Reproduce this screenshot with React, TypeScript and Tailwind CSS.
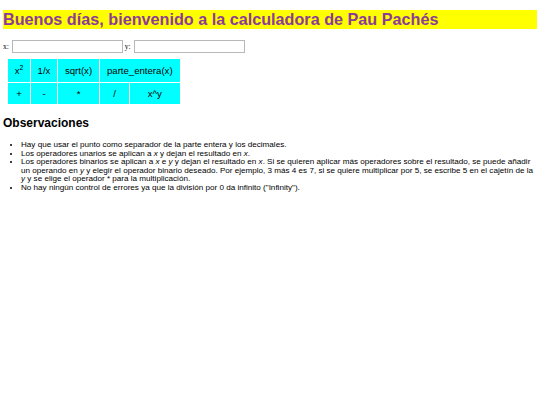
export default function App() {
  const sans = { fontFamily: '"Liberation Sans", Arial, sans-serif' }
  return (
    <div className="min-h-[405px] bg-white px-[3px] pt-[10px] text-black" style={sans}>
      <h1 className="bg-[#ffff00] text-[16.2px] font-bold leading-[19px] text-[#8e3b98]">
        Buenos días, bienvenido a la calculadora de Pau Pachés
      </h1>

      <div className="mt-[11px] flex items-center text-[7.5px]" style={{ fontFamily: '"Liberation Serif", serif' }}>
        <span className="mr-[3px]">x:</span>
        <input className="h-[13px] w-[111px] border border-[#b8b8b8] bg-white" />
        <span className="ml-[2px] mr-[3px]">y:</span>
        <input className="h-[13px] w-[111px] border border-[#b8b8b8] bg-white" />
      </div>

      <table className="ml-[4px] mt-[5px] border-separate border-spacing-[1px] text-center text-[9.6px] leading-none">
        <tbody>
          <tr className="h-[23px]">
            <td className="w-[22px] bg-[#00ffff]">
              x<sup className="text-[7px]">2</sup>
            </td>
            <td className="w-[26px] bg-[#00ffff]">1/x</td>
            <td className="w-[41px] bg-[#00ffff]">sqrt(x)</td>
            <td colSpan={2} className="bg-[#00ffff] px-[7px]">parte_entera(x)</td>
          </tr>
          <tr className="h-[21px]">
            <td className="bg-[#00ffff]">+</td>
            <td className="bg-[#00ffff]">-</td>
            <td className="bg-[#00ffff]">*</td>
            <td className="w-[29px] bg-[#00ffff]">/</td>
            <td className="bg-[#00ffff]">x^y</td>
          </tr>
        </tbody>
      </table>

      <h2 className="mt-[11px] text-[12px] font-bold leading-[14px]">Observaciones</h2>

      <ul className="mt-[11px] list-disc pl-[18px] text-[8.1px] leading-[8.5px]">
        <li>Hay que usar el punto como separador de la parte entera y los decimales.</li>
        <li>
          Los operadores unarios se aplican a <i>x</i> y dejan el resultado en <i>x</i>.
        </li>
        <li>
          Los operadores binarios se aplican a <i>x</i> e <i>y</i> y dejan el resultado en <i>x</i>. Si se
          quieren aplicar más operadores sobre el resultado, se puede añadir un operando en <i>y</i> y elegir el
          operador binario deseado. Por ejemplo, 3 más 4 es 7, si se quiere multiplicar por 5, se escribe 5 en el
          cajetín de la <i>y</i> y se elige el operador * para la multiplicación.
        </li>
        <li>No hay ningún control de errores ya que la división por 0 da infinito ("Infinity").</li>
      </ul>
    </div>
  )
}
